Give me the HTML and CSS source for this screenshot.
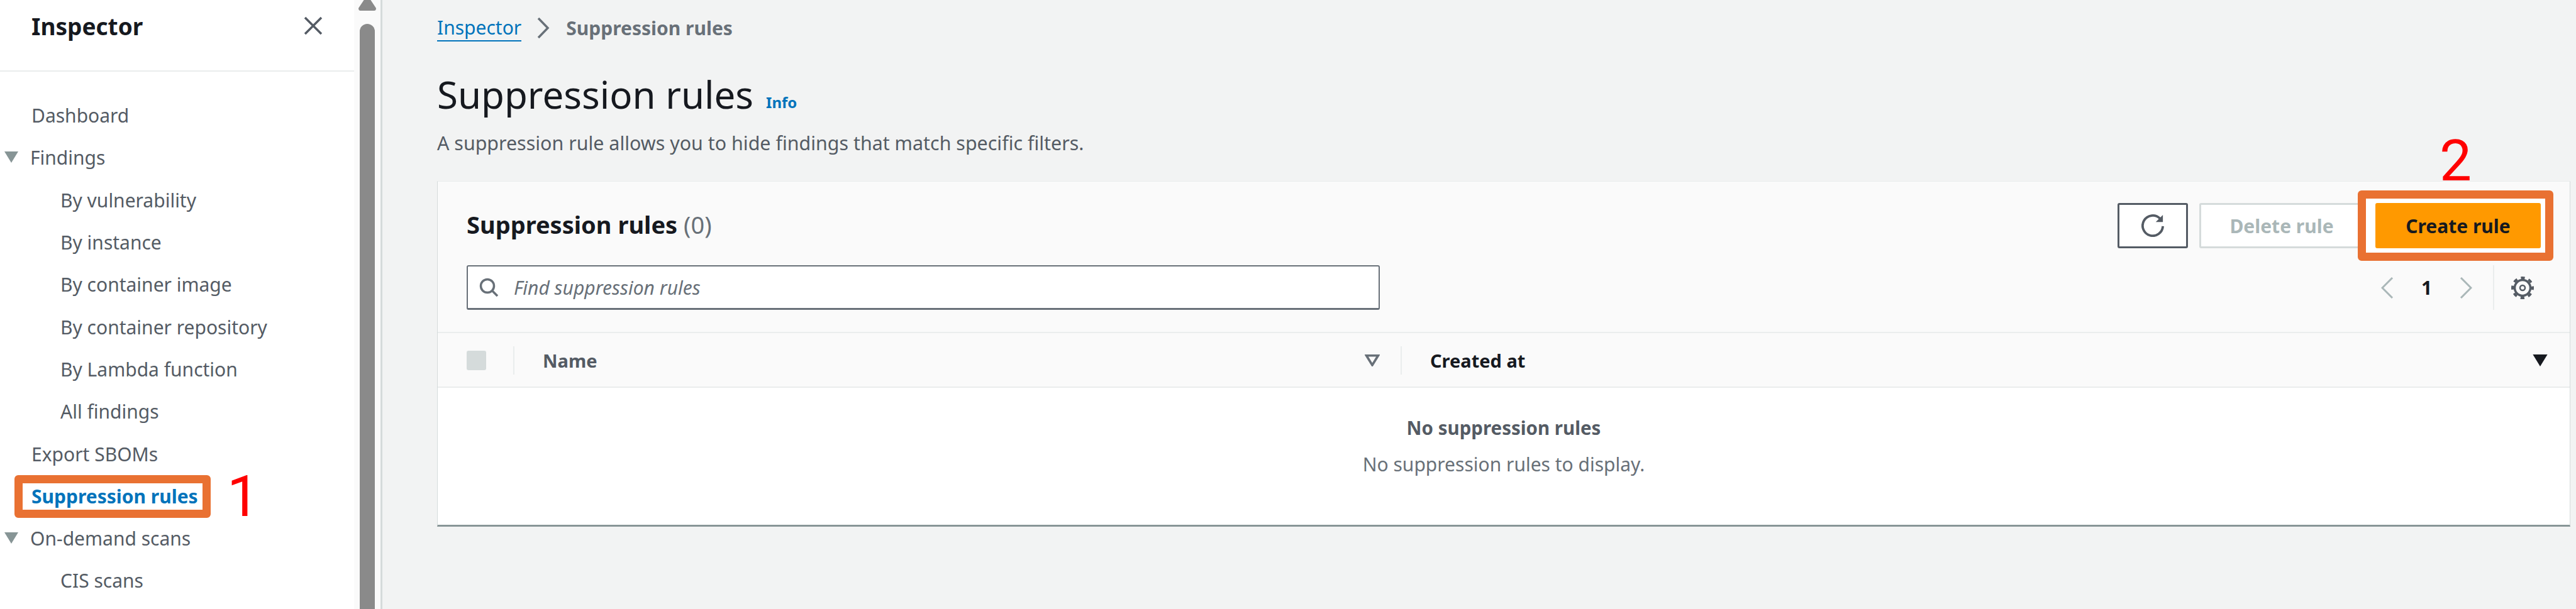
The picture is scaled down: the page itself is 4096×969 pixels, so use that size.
FILE: index.html
```html
<!DOCTYPE html>
<html lang="en">
<head>
<meta charset="utf-8">
<title>Suppression rules</title>
<link rel="stylesheet" href="styles.css">
</head>
<body>
<aside class="sidebar">
  <div class="nav-panel">
    <header class="nav-header">
      <h2 class="nav-title">Inspector</h2>
      <svg class="nav-close" viewBox="0 0 30 30"><path d="M2 2 28 28M28 2 2 28"/></svg>
    </header>
    <ul class="nav-list">
      <li class="nav-item">Dashboard</li>
      <li class="nav-item nav-group"><svg class="caret" viewBox="0 0 22 18"><path d="M0 0H22L11 18Z"/></svg>Findings</li>
      <li class="nav-item nav-child">By vulnerability</li>
      <li class="nav-item nav-child">By instance</li>
      <li class="nav-item nav-child">By container image</li>
      <li class="nav-item nav-child">By container repository</li>
      <li class="nav-item nav-child">By Lambda function</li>
      <li class="nav-item nav-child">All findings</li>
      <li class="nav-item">Export SBOMs</li>
      <li class="nav-item nav-active"><span class="nav-callout"></span><span class="nav-active-label">Suppression rules</span><span class="step step-one">1</span></li>
      <li class="nav-item nav-group"><svg class="caret" viewBox="0 0 22 18"><path d="M0 0H22L11 18Z"/></svg>On-demand scans</li>
      <li class="nav-item nav-child">CIS scans</li>
    </ul>
  </div>
  <div class="scrollbar">
    <svg class="scroll-up" viewBox="0 0 28 17"><path d="M14 -8 28 13Q28 17 25 17H3Q0 17 0 13Z"/></svg>
    <div class="scroll-thumb"></div>
  </div>
</aside>
<main class="content">
  <nav class="breadcrumb">
    <a class="crumb-link">Inspector</a>
    <svg class="crumb-sep" viewBox="0 0 20 33"><path d="M2 1 17 16.5 2 32"/></svg>
    <span class="crumb-current">Suppression rules</span>
  </nav>
  <div class="page-head">
    <h1 class="page-title">Suppression rules</h1>
    <a class="info-link">Info</a>
  </div>
  <p class="page-desc">A suppression rule allows you to hide findings that match specific filters.</p>
  <section class="card">
    <div class="card-head">
      <div class="toolbar">
        <h2 class="card-title">Suppression rules <span class="count">(0)</span></h2>
        <div class="actions">
          <button class="btn btn-icon" type="button">
            <svg class="icon-refresh" viewBox="0 0 38 38"><path d="M36 20A17 17 0 1 1 31 7"/><path class="refresh-head" d="M36 1V13H24Z"/></svg>
          </button>
          <button class="btn btn-disabled" type="button">Delete rule</button>
          <div class="create-wrap">
            <span class="step step-two">2</span>
            <span class="create-callout"></span>
            <button class="btn btn-primary" type="button">Create rule</button>
          </div>
        </div>
      </div>
      <div class="filter-row">
        <label class="search">
          <svg class="icon-search" viewBox="0 0 31 31"><circle cx="13" cy="13" r="10.5"/><path d="M20.5 20.5 29 29"/></svg>
          <span class="placeholder">Find suppression rules</span>
        </label>
        <div class="pager">
          <svg class="pager-arrow" viewBox="0 0 20 34"><path d="M18 1 2 17 18 33"/></svg>
          <span class="pager-num">1</span>
          <svg class="pager-arrow" viewBox="0 0 20 34"><path d="M2 1 18 17 2 33"/></svg>
          <span class="pager-divider"></span>
          <svg class="icon-gear" viewBox="0 0 38 38"><circle cx="19" cy="19" r="12.500"/><circle class="gear-teeth" cx="19" cy="19" r="16"/><circle class="gear-hub" cx="19" cy="19" r="4"/></svg>
        </div>
      </div>
    </div>
    <div class="table-head">
      <div class="col-check"><span class="checkbox"></span></div>
      <div class="col col-name">
        <span class="col-label">Name</span>
        <svg class="sort" viewBox="0 0 22 18"><path class="sort-open" d="M2 1.500H20L11 16Z"/></svg>
      </div>
      <div class="col col-created">
        <span class="col-label col-label-strong">Created at</span>
        <svg class="sort" viewBox="0 0 22 18"><path class="sort-solid" d="M0 0H22L11 18Z"/></svg>
      </div>
    </div>
    <div class="table-empty">
      <p class="empty-title">No suppression rules</p>
      <p class="empty-text">No suppression rules to display.</p>
    </div>
  </section>
</main>
</body>
</html>
```
FILE: styles.css
```css
* { box-sizing: border-box; }
html, body { height: 100%; }
body {
  margin: 0;
  display: flex;
  overflow: hidden;
  background: #f2f3f3;
  color: #16191f;
  font-family: "Noto Sans", "Liberation Sans", sans-serif;
  font-size: 30px;
}
h1, h2, p, ul { margin: 0; padding: 0; }
ul { list-style: none; }

.sidebar {
  flex: 0 0 608px;
  display: flex;
  height: 100%;
  background: #fff;
  border-right: 3px solid #d5dbdb;
}
.nav-panel { flex: 0 0 563px; }
.nav-header {
  height: 114px;
  padding: 0 50px 30px 50px;
  border-bottom: 2px solid #eaeded;
  display: flex;
  align-items: center;
  justify-content: space-between;
}
.nav-title { font-size: 37px; font-weight: 700; color: #16191f; }
.nav-close { width: 30px; height: 30px; fill: none; stroke: #545b64; stroke-width: 3.500; }
.nav-list { padding-top: 36px; }
.nav-item {
  position: relative;
  height: 67.3px;
  padding-left: 50px;
  display: flex;
  align-items: center;
  color: #545b64;
  font-size: 30px;
  white-space: nowrap;
}
.nav-group { padding-left: 48px; }
.nav-child { padding-left: 96px; }
.nav-active { color: #0073bb; font-weight: 700; }
.nav-active-label { position: relative; }
.caret { position: absolute; left: 7px; top: 24px; width: 22px; height: 18px; fill: #879596; }
.nav-callout {
  position: absolute;
  left: 23px;
  top: 0;
  width: 312px;
  height: 68px;
  border: 13px solid #e97132;
  border-radius: 6px;
}
.step {
  position: absolute;
  color: #f00;
  font-family: Roboto, "Liberation Sans", sans-serif;
  font-weight: 400;
  font-size: 91px;
  line-height: 90px;
}
.step-one { left: 361px; top: -11px; }
.step-two { left: 102px; top: -112px; }

.scrollbar {
  flex: 1;
  background: #fafafa;
  display: flex;
  flex-direction: column;
  align-items: center;
}
.scroll-up { width: 28px; height: 17px; fill: #8a8a8a; flex: none; }
.scroll-thumb {
  flex: 1;
  width: 24px;
  margin-top: 21px;
  background: #8a8a8a;
  border-radius: 12px 12px 0 0;
}

.content { flex: 1; min-width: 0; padding: 0 9px 0 87px; }
.breadcrumb { height: 64px; padding-top: 24px; display: flex; align-items: center; font-size: 30px; }
.crumb-link { color: #0073bb; border-bottom: 2px solid #0073bb; line-height: 40px; height: 42px; margin-top: 2px; }
.crumb-sep { width: 20px; height: 33px; margin: 0 26px 0 25px; fill: none; stroke: #687078; stroke-width: 3.500; }
.crumb-current { color: #687078; font-weight: 700; }
.page-head { margin-top: 48px; height: 76px; display: flex; align-items: flex-end; gap: 20px; }
.page-title { font-size: 60px; font-weight: 400; line-height: 76px; color: #16191f; }
.info-link { color: #0073bb; font-size: 24px; font-weight: 700; line-height: 32px; padding-bottom: 9px; }
.page-desc { margin-top: 20px; line-height: 40px; color: #545b64; font-size: 30.4px; }

.card {
  margin-top: 40px;
  background: #fff;
  border: 1px solid #eaeded;
  border-left-color: #d5dbdb;
  border-right-color: #d5dbdb;
  border-bottom: 3px solid #879596;
}
.card-head {
  background: #fafafa;
  height: 241px;
  padding: 34px 46px 0 46px;
  border-bottom: 2px solid #eaeded;
}
.toolbar { display: flex; justify-content: space-between; align-items: center; height: 72px; }
.card-title { font-size: 38px; font-weight: 700; color: #16191f; margin-top: -4px; }
.count { color: #687078; font-weight: 400; }
.actions { display: flex; align-items: center; gap: 18px; }
.btn {
  height: 72px;
  border-radius: 3px;
  font-family: inherit;
  font-size: 30px;
  font-weight: 700;
  padding: 0;
  display: flex;
  align-items: center;
  justify-content: center;
}
.btn-icon { width: 112px; background: #fff; border: 3px solid #545b64; }
.icon-refresh { width: 36px; height: 36px; fill: none; stroke: #545b64; stroke-width: 4; }
.refresh-head { fill: #545b64; stroke: none; }
.btn-disabled { width: 262px; background: #fff; border: 3px solid #d5dbdb; color: #aab7b8; }
.create-wrap { position: relative; }
.create-callout {
  position: absolute;
  left: -28px; right: -20px; top: -20px; bottom: -20px;
  background: #fff;
  border: 13px solid #e97132;
  border-radius: 6px;
}
.btn-primary { position: relative; width: 263px; background: #f90; border: 0; color: #16191f; }

.filter-row { display: flex; justify-content: space-between; align-items: center; height: 71px; margin-top: 27px; }
.search {
  width: 1452px;
  height: 71px;
  display: flex;
  align-items: center;
  gap: 24px;
  padding-left: 18px;
  background: #fff;
  border: 2px solid #687078;
  border-bottom-width: 3px;
  border-radius: 3px;
}
.icon-search { width: 31px; height: 31px; fill: none; stroke: #687078; stroke-width: 3.500; }
.placeholder { color: #687078; font-style: italic; }
.pager { display: flex; align-items: center; margin-right: 10px; }
.pager-arrow { width: 20px; height: 34px; fill: none; stroke: #aab7b8; stroke-width: 3; }
.pager-num { width: 105px; text-align: center; font-weight: 700; }
.pager-divider { width: 2px; height: 71px; margin: 0 26px 0 33px; background: #eaeded; }
.icon-gear { width: 38px; height: 38px; fill: none; stroke: #545b64; stroke-width: 3.500; }
.gear-teeth { stroke-width: 4; stroke-dasharray: 6.283 6.283; stroke-dashoffset: 3.142; }
.gear-hub { stroke-width: 2.500; }

.table-head { display: flex; align-items: center; height: 87px; background: #fafafa; border-bottom: 2px solid #eaeded; padding-top: 2px; }
.col-check { flex: 0 0 120px; padding-left: 46px; display: flex; align-items: center; }
.checkbox { width: 31px; height: 31px; background: #d5dbdb; border-radius: 3px; }
.col { height: 45px; display: flex; align-items: center; justify-content: space-between; border-left: 2px solid #eaeded; padding-left: 45px; }
.col-name { flex: 0 0 1411px; padding-right: 33px; }
.col-created { flex: 1; padding-right: 35px; }
.col-label { font-weight: 700; color: #545b64; font-size: 29px; }
.col-label-strong { color: #16191f; }
.sort { width: 24px; height: 19px; }
.sort-open { fill: none; stroke: #687078; stroke-width: 3.500; }
.sort-solid { fill: #16191f; }

.table-empty { height: 218px; padding-top: 44px; text-align: center; }
.empty-title { font-weight: 700; color: #545b64; line-height: 40px; font-size: 29.5px; }
.empty-text { color: #687078; line-height: 40px; margin-top: 18px; }
```
